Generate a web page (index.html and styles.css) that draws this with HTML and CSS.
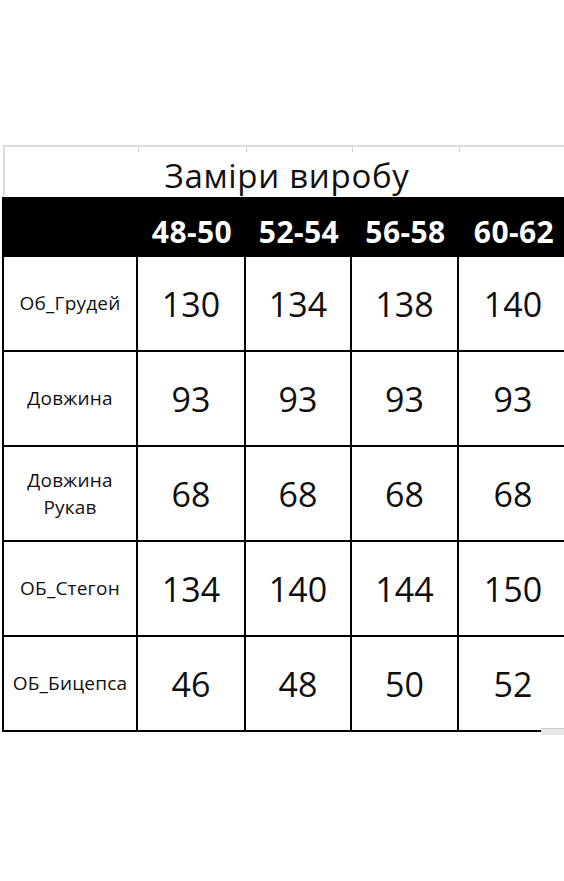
FILE: index.html
```html
<!DOCTYPE html>
<html lang="uk">
<head>
<meta charset="utf-8">
<title>Заміри виробу</title>
<link rel="stylesheet" href="styles.css">
</head>
<body>
<div class="page">
  <div class="sheet">
    <div class="title-row"><span class="title">Заміри виробу</span></div>
    <div class="head-row">
      <div class="hcell"></div>
      <div class="hcell">48-50</div>
      <div class="hcell">52-54</div>
      <div class="hcell">56-58</div>
      <div class="hcell">60-62</div>
    </div>
    <div class="body">
      <div class="cell label">Об_Грудей</div>
      <div class="cell num">130</div>
      <div class="cell num">134</div>
      <div class="cell num">138</div>
      <div class="cell num">140</div>

      <div class="cell label">Довжина</div>
      <div class="cell num">93</div>
      <div class="cell num">93</div>
      <div class="cell num">93</div>
      <div class="cell num">93</div>

      <div class="cell label">Довжина<br>Рукав</div>
      <div class="cell num">68</div>
      <div class="cell num">68</div>
      <div class="cell num">68</div>
      <div class="cell num">68</div>

      <div class="cell label">ОБ_Стегон</div>
      <div class="cell num">134</div>
      <div class="cell num">140</div>
      <div class="cell num">144</div>
      <div class="cell num">150</div>

      <div class="cell label">ОБ_Бицепса</div>
      <div class="cell num">46</div>
      <div class="cell num">48</div>
      <div class="cell num">50</div>
      <div class="cell num">52</div>
    </div>
    <div class="scroll-nub"></div>
  </div>
</div>
</body>
</html>
```
FILE: styles.css
```css
html, body {
  margin: 0;
  padding: 0;
  background: #ffffff;
  overflow: hidden;
}

.page {
  width: 564px;
  height: 881px;
  overflow: hidden;
  padding-top: 145px;
  box-sizing: border-box;
}

.sheet {
  position: relative;
  width: 567px;
  margin-left: 2px;
  font-family: "Open Sans", "Noto Sans", sans-serif;
  color: #111111;
}

.title-row {
  height: 52px;
  box-sizing: border-box;
  border-top: 2px solid #dcdcdc;
  border-left: 2px solid #dcdcdc;
  margin-left: 1px;
  padding-top: 12px;
  text-align: center;
  background-image:
    linear-gradient(#cfcfcf, #cfcfcf),
    linear-gradient(#cfcfcf, #cfcfcf),
    linear-gradient(#cfcfcf, #cfcfcf),
    linear-gradient(#cfcfcf, #cfcfcf);
  background-size: 1px 5px;
  background-repeat: no-repeat;
  background-position: 133px 0, 241px 0, 347px 0, 454px 0;
}

.title {
  display: inline-block;
  font-size: 33px;
  line-height: 33px;
  letter-spacing: 0.7px;
  color: #111111;
}

.head-row {
  display: grid;
  grid-template-columns: 136px 108px 106px 107px 110px;
  height: 60px;
  background: #000000;
  color: #ffffff;
  box-sizing: border-box;
  padding-top: 19px;
}

.hcell {
  text-align: center;
  font-weight: 700;
  font-size: 30px;
  line-height: 31px;
  letter-spacing: 0.4px;
}

.body {
  display: grid;
  grid-template-columns: 136px 108px 106px 107px 110px;
  grid-auto-rows: 95px;
}

.cell {
  box-sizing: border-box;
  border-right: 2px solid #000;
  border-bottom: 2px solid #000;
  display: flex;
  align-items: center;
  justify-content: center;
  text-align: center;
}

.label {
  border-left: 2px solid #000;
  font-size: 19px;
  line-height: 27px;
  letter-spacing: 0.2px;
  color: #111111;
}

.num {
  font-size: 34px;
  line-height: 34px;
  color: #0f0f0f;
}

.scroll-nub {
  position: absolute;
  left: 539px;
  top: 583px;
  width: 26px;
  height: 6px;
  background: #e6e6e6;
  border-top: 1px solid #d0d0d0;
}
```
